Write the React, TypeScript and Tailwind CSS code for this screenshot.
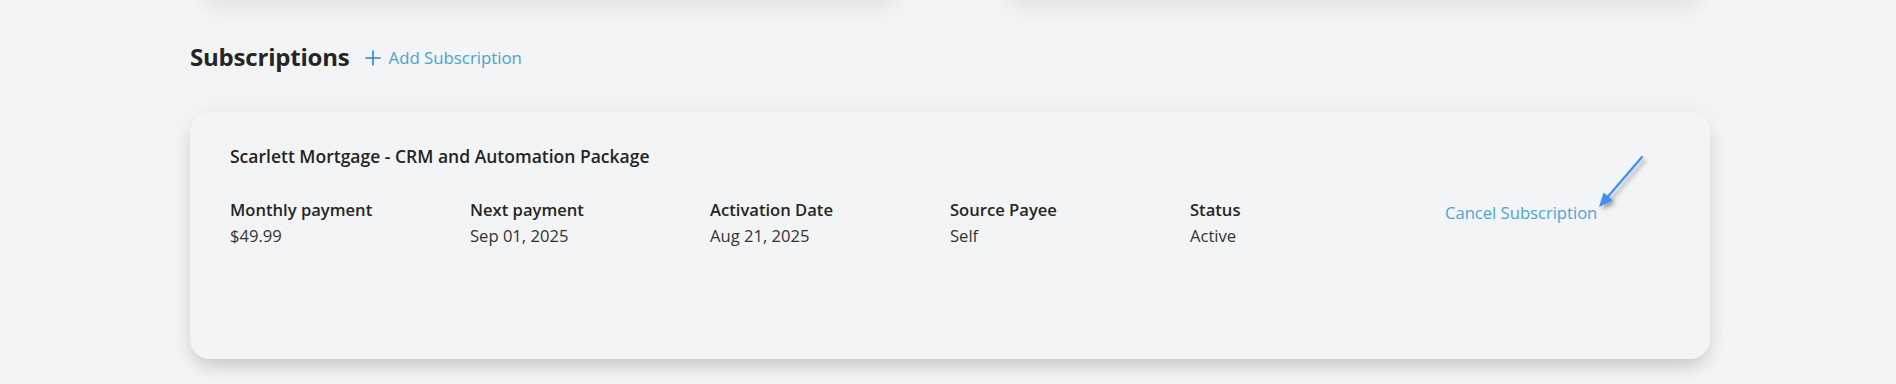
import { Plus } from "lucide-react";

const fields = [
  { label: "Monthly payment", value: "$49.99" },
  { label: "Next payment", value: "Sep 01, 2025" },
  { label: "Activation Date", value: "Aug 21, 2025" },
  { label: "Source Payee", value: "Self" },
  { label: "Status", value: "Active" },
];

function PointerArrow() {
  return (
    <svg
      className="absolute left-[1400px] top-[38px] drop-shadow-[3px_3px_2px_rgba(0,0,0,0.35)]"
      width="60"
      height="70"
      viewBox="0 0 60 70"
      fill="none"
    >
      <line x1="52" y1="7" x2="18" y2="46.5" stroke="#3d8ef7" strokeWidth="2.2" strokeLinecap="round" />
      <polygon points="9,57 22.6,50.3 13.6,42.5" fill="#3d8ef7" />
    </svg>
  );
}

export default function App() {
  return (
    <div className="min-h-[384px] bg-[#f3f4f6] overflow-hidden font-['Open_Sans',sans-serif] text-[#2a2a2a]">
      {/* cards from the section above, scrolled mostly out of view */}
      <div className="flex gap-[110px] pl-[202px] -mt-[80px]">
        <div className="w-[695px] h-[78px] rounded-[20px] bg-[#f3f4f6] shadow-[0_8px_24px_rgba(0,0,0,0.09)]" />
        <div className="w-[695px] h-[78px] rounded-[20px] bg-[#f3f4f6] shadow-[0_8px_24px_rgba(0,0,0,0.09)]" />
      </div>

      <div className="w-[1520px] ml-[190px] pt-[43px]">
        <div className="flex items-center h-[32px]">
          <h2 className="text-[24px] font-bold text-[#252525] tracking-[-0.2px]">Subscriptions</h2>
          <button className="flex items-center ml-[11px] mt-[2px] text-[16.8px] text-[#4aa2d2]">
            <Plus className="w-[24px] h-[24px] text-[#2c86c8] mr-[4px]" strokeWidth={1.6} />
            Add Subscription
          </button>
        </div>

        <div className="relative mt-[39px] h-[247px] rounded-[20px] bg-[#f3f4f6] shadow-[0_10px_18px_-4px_rgba(0,0,0,0.18),0_0_30px_rgba(0,0,0,0.04)] pt-[32px] px-[40px]">
          <h3 className="text-[17.5px] leading-[24px] font-semibold text-[#242424]">
            Scarlett Mortgage - CRM and Automation Package
          </h3>
          <div className="flex mt-[28px]">
            {fields.map((f) => (
              <div key={f.label} className="w-[240px]">
                <div className="text-[16.6px] leading-[27px] font-semibold text-[#262626]">{f.label}</div>
                <div className="text-[16.6px] leading-[26px] text-[#333333]">{f.value}</div>
              </div>
            ))}
            <button className="ml-[15px] mt-[4px] h-[27px] text-[16.6px] text-[#4aa5d4]">Cancel Subscription</button>
          </div>
          <PointerArrow />
        </div>
      </div>
    </div>
  );
}
